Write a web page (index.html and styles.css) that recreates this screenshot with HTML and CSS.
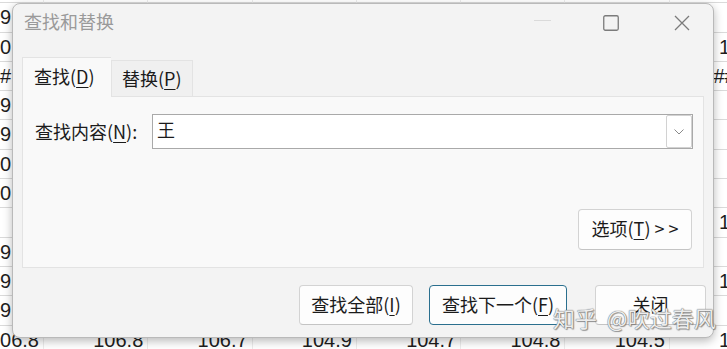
FILE: index.html
```html
<!DOCTYPE html>
<html lang="zh-CN">
<head>
<meta charset="utf-8">
<title>查找和替换</title>
<link rel="stylesheet" href="styles.css">
</head>
<body>
<div class="sheet">
  <div class="cell"></div><div class="cell"></div><div class="cell"></div><div class="cell"></div><div class="cell"></div><div class="cell"></div><div class="cell"></div><div class="cell"></div>
  <div class="cell first">9</div><div class="cell"></div><div class="cell"></div><div class="cell"></div><div class="cell"></div><div class="cell"></div><div class="cell"></div><div class="cell"></div>
  <div class="cell first">0</div><div class="cell"></div><div class="cell"></div><div class="cell"></div><div class="cell"></div><div class="cell"></div><div class="cell"></div><div class="cell">103.6</div>
  <div class="cell first">#</div><div class="cell"></div><div class="cell"></div><div class="cell"></div><div class="cell"></div><div class="cell"></div><div class="cell"></div><div class="cell">#####</div>
  <div class="cell first">9</div><div class="cell"></div><div class="cell"></div><div class="cell"></div><div class="cell"></div><div class="cell"></div><div class="cell"></div><div class="cell"></div>
  <div class="cell first">9</div><div class="cell"></div><div class="cell"></div><div class="cell"></div><div class="cell"></div><div class="cell"></div><div class="cell"></div><div class="cell"></div>
  <div class="cell first">0</div><div class="cell"></div><div class="cell"></div><div class="cell"></div><div class="cell"></div><div class="cell"></div><div class="cell"></div><div class="cell"></div>
  <div class="cell first">0</div><div class="cell"></div><div class="cell"></div><div class="cell"></div><div class="cell"></div><div class="cell"></div><div class="cell"></div><div class="cell"></div>
  <div class="cell first"></div><div class="cell"></div><div class="cell"></div><div class="cell"></div><div class="cell"></div><div class="cell"></div><div class="cell"></div><div class="cell">103.2</div>
  <div class="cell first">9</div><div class="cell"></div><div class="cell"></div><div class="cell"></div><div class="cell"></div><div class="cell"></div><div class="cell"></div><div class="cell"></div>
  <div class="cell first">9</div><div class="cell"></div><div class="cell"></div><div class="cell"></div><div class="cell"></div><div class="cell"></div><div class="cell"></div><div class="cell">102.9</div>
  <div class="cell first">9</div><div class="cell"></div><div class="cell"></div><div class="cell"></div><div class="cell"></div><div class="cell"></div><div class="cell"></div><div class="cell"></div>
  <div class="cell">106.8</div><div class="cell">106.8</div><div class="cell">106.7</div><div class="cell">104.9</div><div class="cell">104.7</div><div class="cell">104.8</div><div class="cell">104.5</div><div class="cell">105.1</div>
</div>

<div class="dialog">
  <div class="titlebar">
    <span class="title">查找和替换</span>
    <div class="controls">
      <svg class="ic-min" width="17" height="12" viewBox="0 0 17 12"><line x1="0" y1="5.5" x2="17" y2="5.5" stroke="#dadada" stroke-width="1"/></svg>
      <svg class="ic-max" width="16" height="16" viewBox="0 0 16 16"><rect x="0.75" y="0.75" width="14.5" height="14.5" rx="1.5" fill="none" stroke="#7b7b7b" stroke-width="1.3"/></svg>
      <svg class="ic-close" width="16" height="16" viewBox="0 0 16 16"><path d="M1 1 L15 15 M15 1 L1 15" stroke="#7b7b7b" stroke-width="1.3" fill="none"/></svg>
    </div>
  </div>

  <div class="tabs">
    <div class="tab active">查找(<u>D</u>)</div>
    <div class="tab">替换(<u>P</u>)</div>
  </div>

  <div class="panel">
    <div class="find-row">
      <label class="label">查找内容(<u>N</u>):</label>
      <div class="combo">
        <span class="combo-text">王</span>
        <span class="drop">
          <svg width="10" height="6" viewBox="0 0 10 6"><path d="M0.5 0.5 L5 5 L9.5 0.5" fill="none" stroke="#8a8a8a" stroke-width="1"/></svg>
        </span>
      </div>
    </div>
    <div class="opt-row">
      <button class="btn opt">选项(<u>T</u>) &gt; &gt;</button>
    </div>
  </div>

  <div class="actions">
    <button class="btn b-all">查找全部(<u>I</u>)</button>
    <button class="btn b-next default">查找下一个(<u>F</u>)</button>
    <button class="btn b-close">关闭</button>
  </div>
</div>

<div class="watermark">知乎&nbsp; @吹过春风</div>
</body>
</html>
```

FILE: styles.css
```css
* { box-sizing: border-box; }

html, body {
  margin: 0;
  padding: 0;
  width: 727px;
  height: 349px;
  overflow: hidden;
  background: #ffffff;
}

body {
  position: relative;
  font-family: "Noto Sans CJK SC", "Noto Sans", sans-serif;
  color: #1b1b1b;
}

/* background spreadsheet */
.sheet {
  display: grid;
  grid-template-columns: 44px repeat(7, 104.3px);
  grid-auto-rows: 29.3px;
  margin-top: -26px;
  font-family: "Liberation Sans", Arial, sans-serif;
  font-size: 20px;
  color: #1e1e1e;
}

.cell {
  border-bottom: 1px solid #dadada;
  border-right: 1px solid #ececec;
  padding-right: 4px;
  line-height: 28px;
  white-space: nowrap;
  overflow: hidden;
  display: flex;
  justify-content: flex-end;
}

.cell.first {
  justify-content: flex-start;
  padding-left: 0;
}

/* dialog */
.dialog {
  position: absolute;
  left: 12px;
  top: 3px;
  width: 702px;
  height: 335px;
  background: #f3f3f3;
  border: 1px solid #b9b9b9;
  border-radius: 8px;
  box-shadow: 0 3px 10px rgba(0, 0, 0, 0.28);
  display: flex;
  flex-direction: column;
}

.titlebar {
  height: 40px;
  display: flex;
  align-items: center;
  padding: 0 23px 6px 11px;
}

.title {
  font-size: 18px;
  color: #9a9a9a;
  line-height: 1;
}

.controls {
  margin-left: auto;
  display: flex;
  align-items: center;
}

.ic-max { margin-left: 52px; margin-top: 3px; }
.ic-close { margin-left: 55px; margin-top: 3px; }

.tabs {
  margin-top: 13px;
  padding-left: 9px;
  display: flex;
  align-items: flex-end;
  position: relative;
  z-index: 1;
}

.tab {
  height: 36px;
  width: 82px;
  border: 1px solid #e3e3e3;
  border-bottom: none;
  background: #f0f0f0;
  font-size: 18px;
  line-height: 1;
  display: flex;
  align-items: center;
  padding-left: 10px;
  padding-bottom: 2px;
  color: #1b1b1b;
}

.tab.active {
  width: 89px;
  height: 40px;
  background: #f9f9f9;
  padding-left: 11px;
  padding-bottom: 4px;
  margin-bottom: -1px;
  border-right: none;
}

.panel {
  margin: 0 9px;
  height: 172px;
  background: #f9f9f9;
  border: 1px solid #e3e3e3;
  padding: 17px 10px 0 12px;
  display: flex;
  flex-direction: column;
}

u {
  text-decoration-thickness: 1px;
  text-underline-offset: 3px;
}

.find-row {
  display: flex;
  align-items: center;
}

.label {
  flex: 0 0 117px;
  font-size: 18px;
  line-height: 1;
  padding-bottom: 1px;
}

.combo {
  flex: 1;
  height: 35px;
  background: #ffffff;
  border: 1px solid #a9a9a9;
  display: flex;
  align-items: center;
  padding: 0 0 0 4px;
}

.combo-text {
  font-size: 18px;
  line-height: 1;
  padding-bottom: 5px;
}

.drop {
  margin-left: auto;
  width: 26px;
  height: 33px;
  border: 1px solid #d2d2d2;
  border-radius: 2px;
  display: flex;
  align-items: center;
  justify-content: center;
}

.opt-row {
  margin-top: 60px;
  display: flex;
  justify-content: flex-end;
  padding-right: 1px;
}

.btn {
  font-family: "Noto Sans CJK SC", "Noto Sans", sans-serif;
  font-size: 18px;
  color: #1b1b1b;
  background: #fdfdfd;
  border: 1px solid #d3d3d3;
  border-bottom-color: #c4c4c4;
  border-radius: 4px;
  height: 40px;
  padding: 0 0 3px;
  line-height: 1;
  display: flex;
  align-items: center;
  justify-content: center;
  white-space: pre;
}

.opt {
  width: 114px;
  height: 41px;
}

.actions {
  margin-top: 17px;
  display: flex;
  justify-content: flex-end;
  padding-right: 7px;
}

.b-all { width: 114px; }
.b-next { width: 138px; margin-left: 16px; }
.b-close { width: 111px; margin-left: 28px; }

.btn.default {
  border: 1px solid #2a6f8e;
  box-shadow: inset 0 0 0 1px #fdfdfd;
}

.watermark {
  position: absolute;
  left: 553px;
  top: 303px;
  font-size: 22px;
  line-height: 1.3;
  color: rgba(255, 255, 255, 0.88);
  text-shadow: 0 0 1px #6e6e6e, 0 0 1px #6e6e6e, 1px 1px 1px rgba(90, 90, 90, 0.6);
  white-space: nowrap;
}
```
